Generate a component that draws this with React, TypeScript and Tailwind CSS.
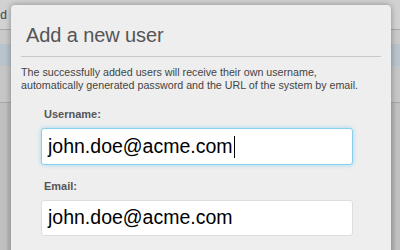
const App = () => {
  return (
    <div className="relative w-[400px] h-[250px] overflow-hidden bg-[#bfbfbf] font-['Liberation_Sans',Arial,sans-serif]">
      {/* dimmed page behind the dialog */}
      <div className="flex flex-col h-full">
        <div className="h-[30px] bg-[#d2d2d2] border-b border-[#a9a9a9] flex items-center text-[12px] text-[#444]">
          <div className="w-[7px] flex justify-end whitespace-nowrap">Saved</div>
        </div>
        <div className="h-[14px] bg-[#c9c9c9]" />
        <div className="h-[22px] bg-[#b8c3cb]" />
        <div className="h-[37px] bg-[#c6c6c6] border-b border-[#a8a8a8]" />
        <div className="flex-1 flex bg-[#c0c0c0]">
          <div className="w-[7px]" />
          <div className="w-[3px] bg-[#b9b9b9]" />
          <div className="flex-1" />
          <div className="w-[4px] bg-[#b9b9b9]" />
          <div className="w-[5px]" />
        </div>
      </div>

      {/* dialog */}
      <div className="absolute left-[11px] top-[5px] w-[380px] h-[260px] bg-[#eeeeee] rounded-t-[4px] shadow-[0_0_6px_rgba(0,0,0,0.35)]">
        <h1 className="h-[51px] pl-[15px] pt-[17px] text-[20px] leading-[26px] tracking-[-0.1px] text-[#555555]">
          Add a new user
        </h1>
        <div className="mx-[10px] border-t border-[#c9c9c9]" />
        <p className="mt-[9px] px-[10px] text-[10.7px] leading-[13px] text-[#444444]">
          The successfully added users will receive their own username,
          <br />
          automatically generated password and the URL of the system by email.
        </p>

        <div className="px-[30px] pt-[15px]">
          <label className="block pl-[3px] text-[11px] leading-[14px] font-bold text-[#555555]">Username:</label>
          <div className="mt-[7px] w-[312px] h-[37px] flex items-center px-[6px] bg-white border border-[#8ccfea] rounded-[3px] shadow-[0_0_4px_#9ad8f2]">
            <span className="text-[19.5px] text-black">john.doe@acme.com</span>
            <span className="ml-[1px] w-px h-[22px] bg-black" />
          </div>

          <label className="block mt-[14px] pl-[3px] text-[11px] leading-[14px] font-bold text-[#555555]">Email:</label>
          <div className="mt-[7px] w-[312px] h-[36px] flex items-center px-[6px] bg-white border border-[#dddddd] rounded-[3px]">
            <span className="text-[19.5px] text-black">john.doe@acme.com</span>
          </div>
        </div>
      </div>
    </div>
  );
};

export default App;
